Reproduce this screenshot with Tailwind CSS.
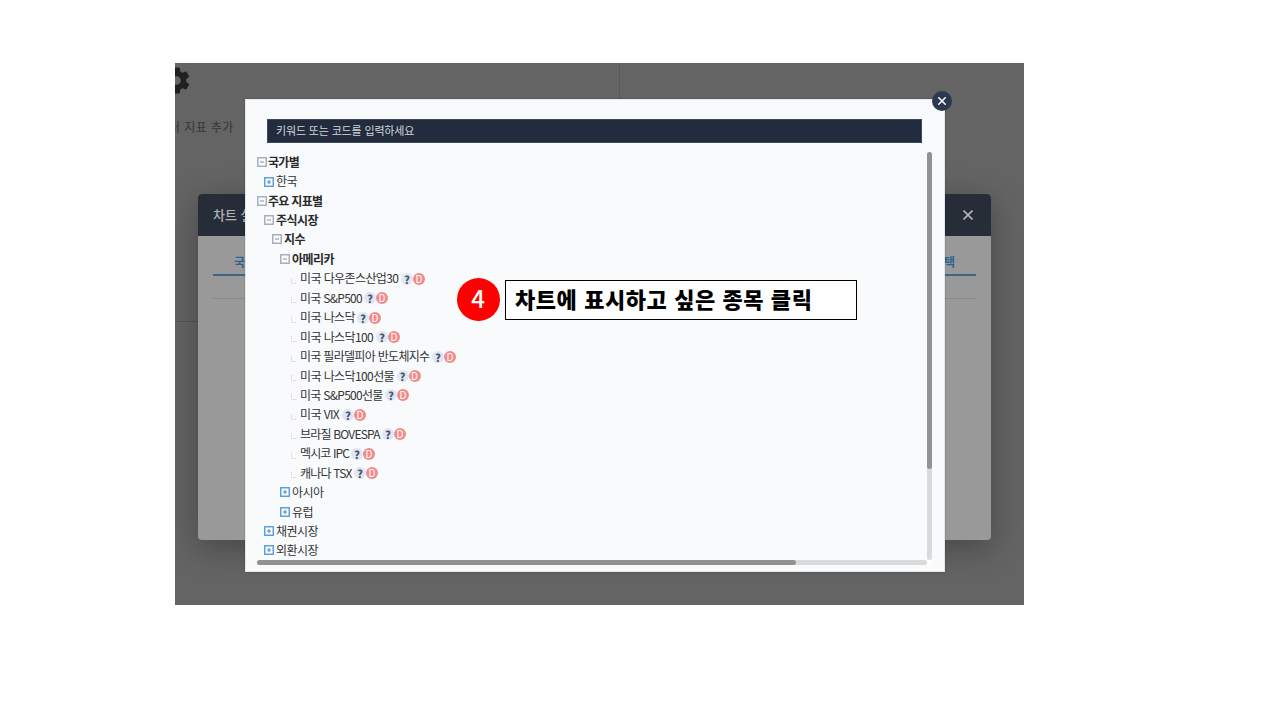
<!DOCTYPE html>
<html lang="ko">
<head>
<meta charset="utf-8">
<title>차트 종목 선택</title>
<script src="https://cdn.jsdelivr.net/npm/@tailwindcss/browser@4"></script>
</head>
<body class="bg-white w-[1280px] h-[720px] overflow-hidden font-['Noto_Sans_CJK_KR','Noto_Sans',sans-serif]">
<svg class="hidden">
  <symbol id="minus" viewBox="0 0 10 10"><rect x=".75" y=".75" width="8.5" height="8.5" fill="none" stroke="#a3acbb" stroke-width="1.4"/><path d="M3 5h4" stroke="#929cac" stroke-width="1.1"/></symbol>
  <symbol id="plus" viewBox="0 0 10 10"><rect x=".75" y=".75" width="8.5" height="8.5" fill="none" stroke="#559bdc" stroke-width="1.4"/><path d="M3 5h4M5 3v4" stroke="#4e94d6" stroke-width="1.2"/></symbol>
  <symbol id="leaf" viewBox="0 0 6 7"><path d="M.5 1v5.500H5.500" fill="none" stroke="#d5d8dc" stroke-width="1" stroke-dasharray="1.6 .6"/></symbol>
</svg>
<main class="relative ml-[175px] mt-[63px] w-[849px] h-[542px] bg-[#646464] overflow-hidden">
  <!-- dimmed page -->
  <svg class="absolute -left-[12px] top-[4px] w-[27px] h-[27px]" viewBox="2 2 20 20" fill="#202020"><path d="M19.14 12.94c.04-.3.06-.61.06-.94s-.02-.64-.07-.94l2.03-1.58a.49.49 0 0 0 .12-.61l-1.92-3.32a.49.49 0 0 0-.59-.22l-2.39.96a7 7 0 0 0-1.62-.94l-.36-2.54A.48.48 0 0 0 13.92 2.400h-3.840a.48.48 0 0 0-.47.41l-.36 2.540c-.59.24-1.130.57-1.620.94l-2.390-.96a.48.48 0 0 0-.59.22L2.740 8.870a.48.48 0 0 0 .12.61l2.030 1.580c-.05.3-.09.63-.09.94s.02.64.07.94l-2.030 1.580a.49.49 0 0 0-.12.61l1.920 3.320c.12.22.37.29.59.22l2.390-.96c.5.38 1.030.7 1.620.94l.36 2.540c.05.24.24.41.48.41h3.840c.24 0 .44-.17.47-.41l.36-2.540a7 7 0 0 0 1.620-.94l2.390.96c.22.08.47 0 .59-.22l1.920-3.320a.48.48 0 0 0-.12-.61zM12 15.200a3.200 3.200 0 1 1 0-6.400 3.200 3.200 0 0 1 0 6.400z"/></svg>
  <p class="absolute -left-[6px] top-[55px] text-xs leading-[18px] text-[#363636] whitespace-nowrap tracking-[0.4px]">러 지표 추가</p>
  <div class="absolute left-[444px] top-0 w-px h-[258px] bg-[#585858]"></div>
  <div class="absolute left-0 top-[258px] w-[23px] h-px bg-[#545454]"></div>

  <!-- chart settings window -->
  <section class="absolute left-[23px] top-[131px] w-[793px] h-[346px] rounded bg-[#999999] shadow-[0_8px_34px_rgba(0,0,0,0.30)] overflow-clip">
    <header class="h-[42px] px-[15px] bg-[#262d38] flex items-center justify-between">
      <span class="text-[13px] font-medium text-[#b0b2b5]">차트 설정</span>
      <svg class="w-[10px] h-[10px] mr-[3px]" viewBox="0 0 10 10" stroke="#b3b5b8" stroke-width="1.6"><path d="M.5.5l9 9M9.500.5l-9 9"/></svg>
    </header>
    <div class="mx-[15px] h-[40px] border-b-2 border-[#3b6686] flex justify-between items-center px-[21px] pt-[13px] text-xs font-bold text-[#2f628f]"><span>국가</span><span>선택</span></div>
    <div class="mx-[15px] h-[23px] border-b border-[#898989]"></div>
  </section>

  <!-- item picker -->
  <section class="absolute left-[70px] top-[36px] w-[700px] h-[473px] bg-[#f8fafc] border border-[#e5e6e7] shadow-[0_0_2px_rgba(0,0,0,0.2)] pl-[11px]">
    <div class="ml-[10px] mt-[19px] w-[655px] h-[24px] bg-[#222c3e] border border-[#3d485b] px-2 pb-[2px] flex items-center text-[11px] tracking-[-0.16px] text-[#d2d5da]">키워드 또는 코드를 입력하세요</div>
    <div class="mt-[9px] flex">
      <ul class="w-[670px] h-[408px] overflow-hidden text-xs text-[#333] whitespace-nowrap
        [&>li]:h-[19.45px] [&>li]:flex [&>li]:items-center [&_svg]:shrink-0 [&_span]:shrink-0
        [&_i]:not-italic [&_i]:w-3 [&_i]:h-3 [&_i]:rounded-full [&_i]:bg-[#dfe6f4] [&_i]:text-[#4c5869] [&_i]:text-[11px] [&_i]:leading-3 [&_i]:font-black [&_i]:text-center [&_i]:mt-px [&_i]:shrink-0
        [&_b]:w-3 [&_b]:h-3 [&_b]:rounded-full [&_b]:bg-[#f28b8b] [&_b]:text-white [&_b]:text-[10px] [&_b]:leading-[11px] [&_b]:font-normal [&_b]:text-center [&_b]:mt-px [&_b]:shrink-0">
        <li class="font-bold text-[#2a2a2a]"><svg class="w-[10px] h-[10px] mr-px"><use href="#minus"/></svg><span class="tracking-[-0.7px]">국가별</span></li>
        <li class="pl-[7px]"><svg class="w-[10px] h-[10px] mr-[2px] mt-px"><use href="#plus"/></svg><span class="tracking-[-0.5px]">한국</span></li>
        <li class="font-bold text-[#2a2a2a]"><svg class="w-[10px] h-[10px] mr-px"><use href="#minus"/></svg><span class="tracking-[-0.7px]">주요 지표별</span></li>
        <li class="pl-[7px] font-bold text-[#2a2a2a]"><svg class="w-[10px] h-[10px] mr-[2px]"><use href="#minus"/></svg><span class="tracking-[-0.5px]">주식시장</span></li>
        <li class="pl-[15px] font-bold text-[#2a2a2a]"><svg class="w-[10px] h-[10px] mr-[2px]"><use href="#minus"/></svg><span class="tracking-[-0.5px]">지수</span></li>
        <li class="pl-[23px] font-bold text-[#2a2a2a]"><svg class="w-[10px] h-[10px] mr-[2px] mt-px"><use href="#minus"/></svg><span class="tracking-[-0.5px]">아메리카</span></li>
        <li class="pl-[34px]"><svg class="w-[6px] h-[7px] mr-[3px] mt-1"><use href="#leaf"/></svg><span class="w-[101px] tracking-[-0.6px]">미국 다우존스산업30</span><i>?</i><b>D</b></li>
        <li class="pl-[34px]"><svg class="w-[6px] h-[7px] mr-[3px] mt-1"><use href="#leaf"/></svg><span class="w-[64px] tracking-[-0.7px]">미국 S&amp;P500</span><i>?</i><b>D</b></li>
        <li class="pl-[34px]"><svg class="w-[6px] h-[7px] mr-[3px] mt-1"><use href="#leaf"/></svg><span class="w-[57px] tracking-[-0.6px]">미국 나스닥</span><i>?</i><b>D</b></li>
        <li class="pl-[34px]"><svg class="w-[6px] h-[7px] mr-[3px] mt-1"><use href="#leaf"/></svg><span class="w-[76px] tracking-[-0.6px]">미국 나스닥100</span><i>?</i><b>D</b></li>
        <li class="pl-[34px]"><svg class="w-[6px] h-[7px] mr-[3px] mt-1"><use href="#leaf"/></svg><span class="w-[132px] tracking-[-0.7px]">미국 필라델피아 반도체지수</span><i>?</i><b>D</b></li>
        <li class="pl-[34px]"><svg class="w-[6px] h-[7px] mr-[3px] mt-1"><use href="#leaf"/></svg><span class="w-[96.500px] tracking-[-0.6px]">미국 나스닥100선물</span><i>?</i><b>D</b></li>
        <li class="pl-[34px]"><svg class="w-[6px] h-[7px] mr-[3px] mt-1"><use href="#leaf"/></svg><span class="w-[85px] tracking-[-0.7px]">미국 S&amp;P500선물</span><i>?</i><b>D</b></li>
        <li class="pl-[34px]"><svg class="w-[6px] h-[7px] mr-[3px] mt-1"><use href="#leaf"/></svg><span class="w-[42px] tracking-[-0.6px]">미국 VIX</span><i>?</i><b>D</b></li>
        <li class="pl-[34px]"><svg class="w-[6px] h-[7px] mr-[3px] mt-1"><use href="#leaf"/></svg><span class="w-[82px] tracking-[-0.8px]">브라질 BOVESPA</span><i>?</i><b>D</b></li>
        <li class="pl-[34px]"><svg class="w-[6px] h-[7px] mr-[3px] mt-1"><use href="#leaf"/></svg><span class="w-[51px] tracking-[-0.9px]">멕시코 IPC</span><i>?</i><b>D</b></li>
        <li class="pl-[34px]"><svg class="w-[6px] h-[7px] mr-[3px] mt-1"><use href="#leaf"/></svg><span class="w-[54px] tracking-[-0.8px]">캐나다 TSX</span><i>?</i><b>D</b></li>
        <li class="pl-[23px]"><svg class="w-[10px] h-[10px] mr-[2px]"><use href="#plus"/></svg><span class="tracking-[-0.5px]">아시아</span></li>
        <li class="pl-[23px]"><svg class="w-[10px] h-[10px] mr-[2px]"><use href="#plus"/></svg><span class="tracking-[-0.5px]">유럽</span></li>
        <li class="pl-[7px]"><svg class="w-[10px] h-[10px] mr-[2px]"><use href="#plus"/></svg><span class="tracking-[-0.5px]">채권시장</span></li>
        <li class="pl-[7px]"><svg class="w-[10px] h-[10px] mr-[2px]"><use href="#plus"/></svg><span class="tracking-[-0.5px]">외환시장</span></li>
      </ul>
      <div class="w-[5px] h-[408px] rounded-sm bg-[#d9dadb]"><div class="h-[317px] rounded-sm bg-[#929292]"></div></div>
    </div>
    <div class="w-[675px] h-[5px] bg-white"><div class="w-[670px] h-[5px] rounded-sm bg-[#d9dadb]"><div class="w-[539px] h-[5px] rounded-sm bg-[#929292]"></div></div></div>
  </section>
  <div class="absolute left-[757px] top-[28px] w-5 h-5 rounded-full bg-[#2b3850] flex items-center justify-center">
    <svg class="w-2 h-2" viewBox="0 0 8 8" stroke="#fff" stroke-width="1.5"><path d="M.3.3l7.400 7.400M7.700.3L.3 7.700"/></svg>
  </div>

  <!-- step callout -->
  <div class="absolute left-[281.5px] top-[215px] flex items-center gap-[5.5px]">
    <div class="w-[43px] h-[43px] rounded-full bg-[#f00] text-white flex items-center justify-center text-[24px] leading-none font-medium pb-[3px]"><span>4</span></div>
    <div class="w-[352px] h-[40px] mt-px bg-white border border-black pl-[9px] pb-[4px] flex items-center text-[22px] leading-none font-black text-black whitespace-nowrap tracking-[0.57px]"><span>차트에 표시하고 싶은 종목 클릭</span></div>
  </div>
</main>
</body>
</html>
